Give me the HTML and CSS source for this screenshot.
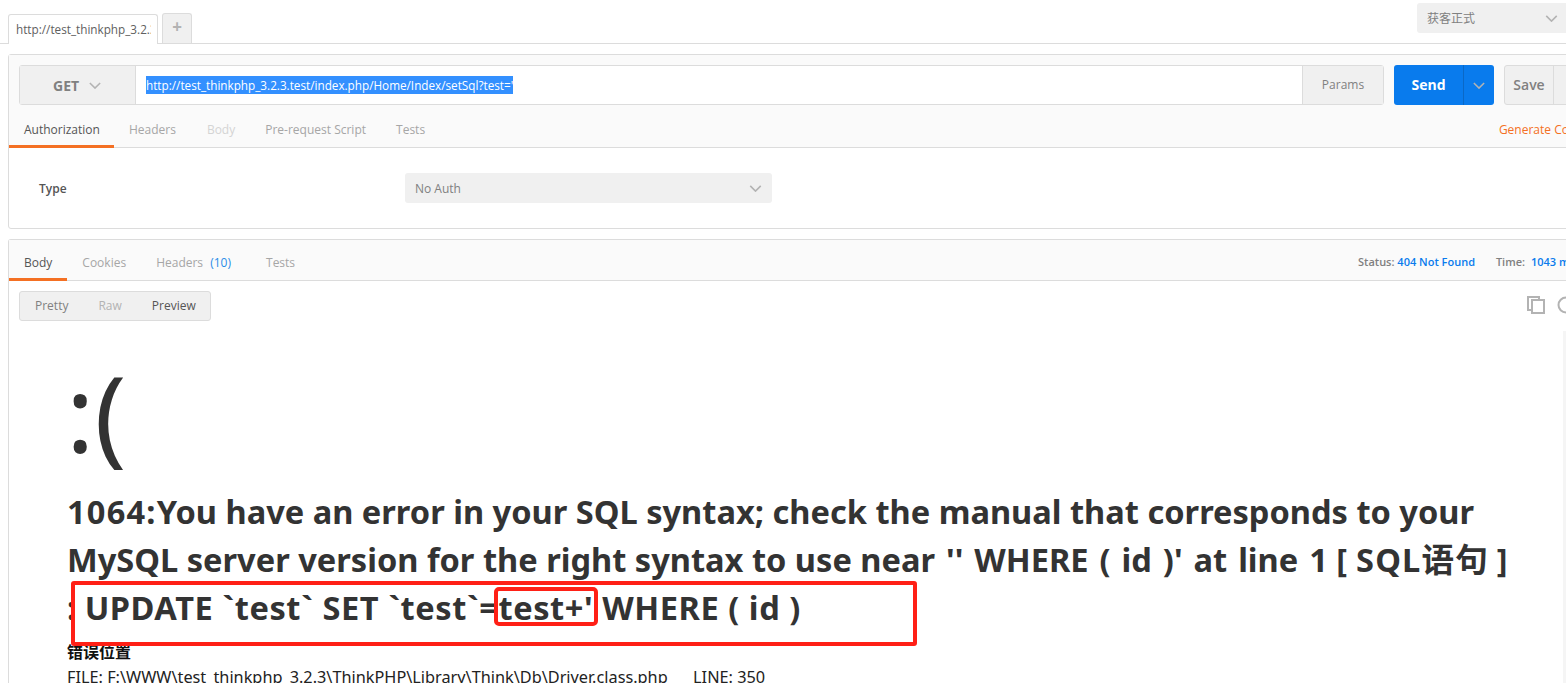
FILE: index.html
```html
<!DOCTYPE html>
<html lang="en">
<head>
    <meta charset="UTF-8">
    <meta name="viewport" content="width=device-width, initial-scale=1.0">
    <title>Postman</title>
    <link rel="stylesheet" href="styles.css">
</head>
<body>
    <div class="topbar">
        <div class="tab-active"><span class="tab-title">http://test_thinkphp_3.2.3</span></div>
        <div class="tab-add">+</div>
        <div class="env">
            <span>获客正式</span>
            <svg class="chev chev-env" viewBox="0 0 14 8"><path d="M1 1l6 6 6-6"/></svg>
        </div>
    </div>

    <div class="panel request">
        <div class="url-row">
            <div class="url-box">
                <div class="method">
                    <span>GET</span>
                    <svg class="chev" viewBox="0 0 14 8"><path d="M1 1l6 6 6-6"/></svg>
                </div>
                <div class="url"><span class="selected">http://test_thinkphp_3.2.3.test/index.php/Home/Index/setSql?test='</span></div>
                <div class="params">Params</div>
            </div>
            <div class="send">
                <span class="send-label">Send</span>
                <span class="send-arrow"><svg class="chev" viewBox="0 0 14 8"><path d="M1 1l6 6 6-6"/></svg></span>
            </div>
            <div class="save">
                <span class="save-label">Save</span>
                <span class="save-arrow"><svg class="chev" viewBox="0 0 14 8"><path d="M1 1l6 6 6-6"/></svg></span>
            </div>
        </div>
        <div class="tabs req-tabs">
            <span class="tab on">Authorization</span>
            <span class="tab">Headers</span>
            <span class="tab off">Body</span>
            <span class="tab">Pre-request Script</span>
            <span class="tab">Tests</span>
            <span class="generate">Generate Code</span>
        </div>
        <div class="auth">
            <span class="auth-label">Type</span>
            <div class="auth-select">
                <span>No Auth</span>
                <svg class="chev chev-env" viewBox="0 0 14 8"><path d="M1 1l6 6 6-6"/></svg>
            </div>
        </div>
    </div>

    <div class="panel response">
        <div class="tabs res-tabs">
            <span class="tab on">Body</span>
            <span class="tab">Cookies</span>
            <span class="tab tab-headers">Headers <em>(10)</em></span>
            <span class="tab">Tests</span>
            <div class="status">
                <span>Status:</span> <b>404 Not Found</b>
                <span class="time">Time:</span> <b class="time-value">1043 ms</b>
            </div>
        </div>
        <div class="view-row">
            <div class="views">
                <span>Pretty</span>
                <span class="off">Raw</span>
                <span class="on">Preview</span>
            </div>
            <div class="tools">
                <svg class="copy" viewBox="0 0 18 18"><path d="M12 4V1H1v13h4"/><path d="M5 4h12v13H5z"/></svg>
                <svg class="search" viewBox="0 0 18 18"><circle cx="9" cy="9" r="7.5"/></svg>
            </div>
        </div>
        <div class="preview">
            <div class="face">:(</div>
            <h1><span class="code">1064:</span>You have an error in your SQL syntax; check the manual that corresponds to your MySQL server version for the right syntax to use <span class="near">near '' WHERE ( id )' at line 1</span> <span class="sql-tag">[ SQL语句 ]</span> : <span class="sql">UPDATE `test` SET `test`=test+' WHERE ( id )</span></h1>
            <div class="where">错误位置</div>
            <div class="file">FILE: F:\WWW\test_thinkphp_3.2.3\ThinkPHP\Library\Think\Db\Driver.class.php &nbsp;&nbsp;&nbsp;&nbsp;&nbsp;LINE: 350</div>
        </div>
    </div>

    <!-- red marks drawn over the screenshot -->
    <div class="mark mark-big"></div>
    <div class="mark mark-small"></div>
    <div class="scroll-edge"></div>
</body>
</html>
```

FILE: styles.css
```css
html, body {
    height: 683px;
    overflow: hidden;
}
body {
    font-family: 'Open Sans', 'Noto Sans CJK SC', sans-serif;
    background-color: white;
    margin: 0;
    padding: 0;
    width: 1566px;
    color: #808080;
    font-size: 12px;
}
.chev {
    width: 12px;
    height: 7px;
    fill: none;
    stroke: #b3b3b3;
    stroke-width: 1.8;
}
.topbar {
    height: 43px;
    border-bottom: 1px solid #dcdcdc;
    display: flex;
    align-items: flex-end;
    padding-left: 8px;
}
.tab-active {
    width: 150px;
    height: 30px;
    box-sizing: border-box;
    border: 1px solid #dcdcdc;
    border-bottom: none;
    border-radius: 3px 3px 0 0;
    background-color: white;
    padding: 6px 0 0 7px;
    margin-bottom: -1px;
    color: #606060;
    font-size: 11.72px;
}
.tab-title {
    display: block;
    width: 135px;
    overflow: hidden;
    white-space: nowrap;
}
.tab-add {
    width: 30px;
    height: 30px;
    box-sizing: border-box;
    margin-left: 4px;
    background-color: #f0f0f0;
    border: 1px solid #dcdcdc;
    border-bottom: none;
    border-radius: 3px 3px 0 0;
    text-align: center;
    font-size: 17px;
    font-weight: 700;
    line-height: 26px;
    color: #b3b3b3;
}
.env {
    margin-left: auto;
    align-self: flex-start;
    margin-top: 3px;
    width: 149px;
    height: 30px;
    box-sizing: border-box;
    background-color: #f0f0f0;
    border-radius: 3px 0 0 3px;
    display: flex;
    align-items: center;
    justify-content: space-between;
    padding: 0 8px 0 10px;
    color: #808080;
}
.chev-env {
    width: 13px;
}
.panel {
    margin-left: 8px;
    width: 1570px;
    box-sizing: border-box;
    border: 1px solid #dcdcdc;
    border-radius: 3px;
}
.request {
    margin-top: 10px;
    height: 175px;
}
.url-row {
    background-color: #fafafa;
    display: flex;
    padding: 10px 0 0 10px;
    height: 40px;
}
.url-box {
    flex: none;
    width: 1365px;
    height: 40px;
    box-sizing: border-box;
    border: 1px solid #dcdcdc;
    border-radius: 3px;
    background-color: white;
    display: flex;
}
.method {
    width: 116px;
    background-color: #f0f0f0;
    border-right: 1px solid #dcdcdc;
    display: flex;
    align-items: center;
    gap: 10px;
    padding-left: 33px;
    box-sizing: border-box;
    font-size: 14px;
    font-weight: 700;
}
.url {
    flex: 1;
    padding-left: 10px;
    line-height: 38px;
    font-size: 11.72px;
    white-space: nowrap;
}
.selected {
    background-color: #3390ff;
    color: white;
    padding: 1px 0;
}
.params {
    width: 80px;
    background-color: #f0f0f0;
    border-left: 1px solid #dcdcdc;
    text-align: center;
    line-height: 38px;
}
.send {
    flex: none;
    margin-left: 10px;
    width: 100px;
    height: 40px;
    background-color: #097bed;
    border-radius: 3px;
    display: flex;
    color: white;
    font-size: 14px;
    font-weight: 700;
    line-height: 40px;
}
.send-label {
    width: 69px;
    text-align: center;
    border-right: 1px solid #0a68c6;
}
.send-arrow, .save-arrow {
    flex: 1;
    display: flex;
    align-items: center;
    justify-content: center;
}
.save {
    flex: none;
    margin-left: 10px;
    width: 100px;
    height: 40px;
    box-sizing: border-box;
    background-color: #f0f0f0;
    border: 1px solid #dcdcdc;
    border-radius: 3px;
    display: flex;
    font-size: 14px;
    font-weight: 600;
    line-height: 38px;
}
.save-label {
    width: 48px;
    text-align: center;
    border-right: 1px solid #dcdcdc;
}
.tabs {
    display: flex;
    align-items: stretch;
    background-color: #fafafa;
    border-bottom: 1px solid #dcdcdc;
    box-sizing: border-box;
}
.tab {
    padding: 0 15px;
    color: #a6a6a6;
    border-bottom: 3px solid transparent;
    margin-bottom: -1px;
}
.tab.on {
    color: #555;
    border-bottom-color: #f47023;
}
.tab.off {
    color: #d4d4d4;
}
.req-tabs {
    height: 43px;
    line-height: 50px;
}
.req-tabs .tab.on {
    padding-right: 14px;
}
.req-tabs .tab:nth-child(2) {
    padding-right: 16px;
}
.generate {
    margin-left: auto;
    margin-right: -6px;
    color: #f47023;
}
.auth {
    display: flex;
    align-items: center;
    padding: 25px 0 0 30px;
}
.auth-label {
    width: 366px;
    color: #555;
    font-weight: 600;
}
.auth-select {
    width: 367px;
    height: 30px;
    box-sizing: border-box;
    background-color: #f0f0f0;
    border-radius: 3px;
    display: flex;
    align-items: center;
    justify-content: space-between;
    padding: 0 10px;
}
.response {
    margin-top: 10px;
    height: 460px;
    border-bottom: none;
}
.res-tabs {
    height: 41px;
    line-height: 46px;
}
.res-tabs .tab em {
    font-style: normal;
    color: #2a8ce8;
    margin-left: 4px;
}
.tab-headers {
    padding-right: 20px;
}
.status {
    margin-left: auto;
    font-size: 11px;
    font-weight: 600;
    color: #808080;
    margin-right: 11px;
    white-space: nowrap;
    line-height: 43px;
    width: 208px;
}
.status b {
    color: #097bed;
    font-weight: 600;
}
.time {
    margin-left: 18px;
}
.status .time-value {
    margin-left: 3px;
}
.view-row {
    display: flex;
    justify-content: space-between;
    padding: 10px 0 0 10px;
}
.views {
    width: 192px;
    height: 30px;
    box-sizing: border-box;
    background-color: #f0f0f0;
    border: 1px solid #dcdcdc;
    border-radius: 3px;
    display: flex;
    gap: 30px;
    padding-left: 15px;
    line-height: 28px;
}
.views .off {
    color: #b3b3b3;
}
.views .on {
    color: #555;
}
.tools {
    display: flex;
    gap: 12px;
    margin: 5px -2px 0 0;
    width: 52px;
}
.tools svg {
    width: 18px;
    height: 18px;
    flex: none;
    fill: none;
    stroke: #b3b3b3;
    stroke-width: 2;
}
.preview {
    padding: 0 0 0 58px;
    width: 1447px;
    color: #333;
    font-family: 'Noto Sans', 'Noto Sans CJK SC', sans-serif;
}
.face {
    font-size: 106px;
    line-height: 120px;
    height: 128px;
    margin-top: 31px;
    margin-left: -1px;
}
h1 {
    font-size: 32.6px;
    font-weight: 700;
    line-height: 48px;
    margin: 8px 0 0 0;
}
.code {
    letter-spacing: 1.2px;
}
.near {
    word-spacing: 2.5px;
}
.sql-tag {
    word-spacing: -2px;
    letter-spacing: 1.2px;
}
.sql {
    letter-spacing: 0.55px;
}
.where {
    margin-top: 8px;
    font-size: 16px;
    font-weight: 700;
    line-height: 24px;
    color: #111;
}
.file {
    font-size: 16.3px;
    line-height: 26px;
    color: #222;
    white-space: nowrap;
}
.mark {
    position: absolute;
    box-sizing: border-box;
    border: 4px solid #ff2016;
    border-radius: 3px;
}
.mark-big {
    left: 71px;
    top: 581px;
    width: 846px;
    height: 65px;
}
.mark-small {
    left: 494px;
    top: 587px;
    width: 104px;
    height: 39px;
    border-radius: 5px;
}
.scroll-edge {
    position: absolute;
    left: 1563px;
    top: 331px;
    width: 3px;
    height: 352px;
    background-color: #f5f5f5;
}
```
